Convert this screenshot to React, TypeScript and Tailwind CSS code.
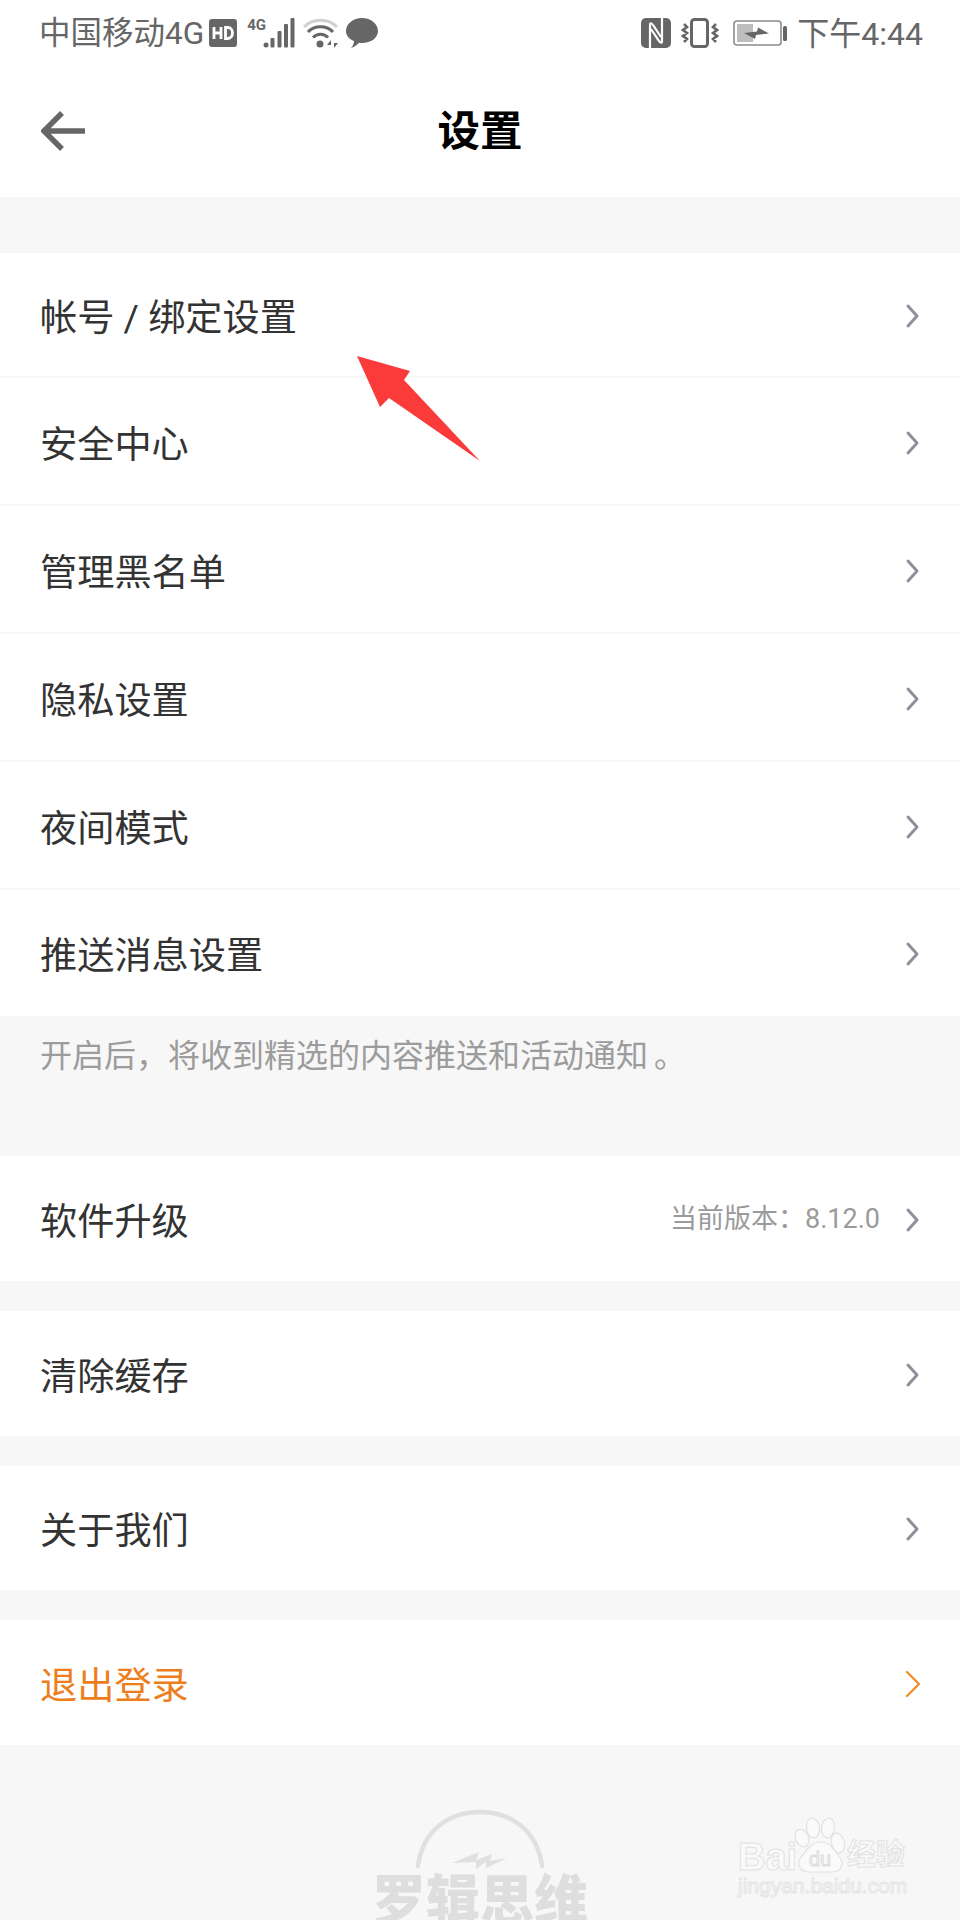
const rows = ['帐号 / 绑定设置', '安全中心', '管理黑名单', '隐私设置', '夜间模式', '推送消息设置']

function Chevron({ orange }: { orange?: boolean }) {
  return (
    <svg width="18" height="30" viewBox="0 0 18 30" fill="none" className={orange ? 'text-[#f08a24]' : 'text-[#8b9099]'}>
      <path d={orange ? 'M3 3 L15 15 L3 27' : 'M4 5 L13 15 L4 25'} stroke="currentColor" strokeWidth={orange ? 2.2 : 3} strokeLinecap="round" strokeLinejoin="round" />
    </svg>
  )
}

function Row({ label, h, divider, orange, right }: { label: string; h: string; divider?: boolean; orange?: boolean; right?: string }) {
  return (
    <div className={`${h} flex shrink-0 items-center justify-between bg-white pl-[40px] pr-[38px] ${divider ? 'border-b-2 border-[#f7f7f7]' : ''}`}>
      <span className={`${divider ? 'pt-[9px]' : 'pt-[8px]'} text-[37.2px] leading-none ${orange ? 'text-[#ee7d1c]' : 'text-[#333333]'}`}>{label}</span>
      <div className={`flex items-center ${divider ? 'pt-[3px]' : 'pt-[2px]'}`}>
        {right && <span className="mr-[24px] text-[27px] leading-none text-[#9a9a9a]">{right}</span>}
        <Chevron orange={orange} />
      </div>
    </div>
  )
}

function StatusIconsLeft() {
  return (
    <div className="ml-[5px] flex items-center">
      <svg width="28" height="28" viewBox="0 0 28 28">
        <rect width="28" height="28" rx="3" fill="#666" />
        <path d="M5 8v12M5 14h7M12 8v12M16.500 8.500v11h2.500a4.500 5.500 0 0 0 0-11z" stroke="#fff" strokeWidth="2.800" fill="none" />
      </svg>
      <div className="relative ml-[10px] h-[30px] w-[48px]">
        <span className="absolute left-0 top-0 text-[15px] font-bold leading-none text-[#666666]">4G</span>
        <svg width="48" height="30" viewBox="0 0 48 30" fill="#666">
          <circle cx="19" cy="27" r="2.500" />
          <rect x="23.500" y="20" width="4" height="9.500" rx="1" />
          <rect x="30.500" y="13" width="4" height="16.500" rx="1" />
          <rect x="37" y="6" width="4" height="23.500" rx="1" />
          <rect x="43.500" y="0" width="4" height="29.500" rx="1" />
        </svg>
      </div>
      <svg width="36" height="30" viewBox="0 0 36 30" className="ml-[8px]" fill="none">
        <path d="M1 9 C10 0 25 0 34 9" stroke="#cfcfcf" strokeWidth="3" />
        <path d="M5 14 C11 7 24 7 30 14" stroke="#666" strokeWidth="3" />
        <path d="M10 19.500 C14 15 21 15 25 19.500" stroke="#666" strokeWidth="3" />
        <circle cx="17" cy="26" r="3.500" fill="#666" />
        <path d="M28 30v-8l-4 5h4zM31 22v8l4-5h-4z" fill="#666" />
      </svg>
      <svg width="32" height="30" viewBox="0 0 32 30" className="ml-[7px]">
        <path d="M16 0 C25 0 32 6 32 13 C32 20 25 25 16 25 C15 25 14 25 13 24.800 C11 27 9 29 5 30 C7 28 8 25.500 8 23 C3 21 0 17.500 0 13 C0 6 7 0 16 0Z" fill="#666" />
      </svg>
    </div>
  )
}

function StatusIconsRight() {
  return (
    <div className="flex items-center">
      <svg width="30" height="30" viewBox="0 0 30 30">
        <rect width="30" height="30" rx="5" fill="#666" />
        <path d="M9 30 V7 Q9 3.500 12 7 L20 19 M21 0 V23 Q21 26.500 18 23 L10 11" stroke="#fff" strokeWidth="2.200" fill="none" />
      </svg>
      <svg width="38" height="30" viewBox="0 0 38 30" className="ml-[10px]" fill="none" stroke="#666">
        <rect x="10.500" y="1.500" width="16" height="27" rx="3" strokeWidth="3" />
        <path d="M3 6l3 3-4 3 4 3-4 3 4 3-3 3M35 6l-3 3 4 3-4 3 4 3-4 3 3 3" strokeWidth="2.600" />
      </svg>
      <svg width="54" height="26" viewBox="0 0 54 26" className="ml-[14px]">
        <rect x="1" y="1" width="47" height="24" rx="3" fill="#fff" stroke="#8c8c8c" strokeWidth="1.600" />
        <rect x="4" y="4" width="16" height="18" fill="#bdbdbd" />
        <path d="M11 13l13-1.500 1-4 11 6-13 1.500-1 4z" fill="#666" />
        <rect x="50" y="6" width="4" height="15" rx="1.500" fill="#666" />
      </svg>
      <span className="ml-[10px] pt-[2px] text-[32px] leading-none text-[#666666]">下午4:44</span>
    </div>
  )
}

function BottomLogo() {
  return (
    <div className="flex shrink-0 flex-col items-center pt-[63px]">
      <svg width="132" height="62" viewBox="0 0 132 62" fill="none">
        <path d="M4 58 C9 22 35 4 66 4 C97 4 123 22 128 58" stroke="#e0e0e0" strokeWidth="4.500" strokeLinecap="round" />
        <path d="M38 55 L65 44 L62 52 L78 46 L76 53 L93 50 L72 60 L72 54 L62 61 L62 54z" fill="#e0e0e0" />
      </svg>
      <span className="mt-[5px] text-[54px] font-black leading-none text-[#dedede]">罗辑思维</span>
    </div>
  )
}

function Watermark() {
  return (
    <div className="absolute left-[737px] top-[1816px] h-[84px] w-[172px]">
      <svg width="172" height="60" viewBox="0 0 172 60" className="absolute left-0 top-0" fill="#fafafa" stroke="#e2e2e2" strokeWidth="1.200">
        <ellipse cx="65" cy="22" rx="6.500" ry="9" transform="rotate(-25 65 22)" />
        <ellipse cx="76" cy="12" rx="6.500" ry="10" transform="rotate(-8 76 12)" />
        <ellipse cx="91" cy="12" rx="6.500" ry="10" transform="rotate(8 91 12)" />
        <ellipse cx="101" cy="27" rx="6.500" ry="10" transform="rotate(-15 101 27)" />
        <path d="M84 26 C92 26 97 33 102 40 C108 48 104 56 95 56 C90 56 78 56 72 56 C63 56 59 48 64 41 C70 33 76 26 84 26Z" />
      </svg>
      <span className="absolute left-[1px] top-[22px] text-[38px] font-bold leading-none text-[#fafafa] [-webkit-text-stroke:1px_#e2e2e2] [font-family:'Liberation_Sans',sans-serif]">Bai</span>
      <span className="absolute left-[72px] top-[33px] text-[20px] leading-none text-[#fafafa] [-webkit-text-stroke:1px_#dcdcdc] [font-family:'Liberation_Sans',sans-serif]">du</span>
      <span className="absolute left-[110px] top-[25px] text-[29px] font-bold leading-none text-[#fafafa] [-webkit-text-stroke:1px_#e2e2e2]">经验</span>
      <span className="absolute left-[1px] top-[59px] text-[21px] leading-none text-[#fafafa] [-webkit-text-stroke:1px_#e4e4e4] [font-family:'Liberation_Sans',sans-serif]">jingyan.baidu.com</span>
    </div>
  )
}

export default function App() {
  return (
    <div className="relative flex h-[1920px] w-[960px] flex-col overflow-hidden bg-[#f7f7f7] [font-family:Roboto,'Noto_Sans_CJK_SC',sans-serif]">
      <div className="h-[197px] shrink-0 bg-white">
        <div className="flex h-[66px] items-center justify-between pl-[39px] pr-[37px]">
          <div className="flex items-center">
            <span className="pt-[2px] text-[31.500px] leading-none text-[#666666]">中国移动4G</span>
            <StatusIconsLeft />
          </div>
          <StatusIconsRight />
        </div>
        <div className="relative flex h-[131px] items-center justify-center">
          <svg width="46" height="42" viewBox="0 0 46 42" fill="none" className="absolute left-[41px] top-[44px]">
            <path d="M21 3 L3 21 L21 39 M3 21 H44" stroke="#666" strokeWidth="5.500" strokeLinejoin="miter" />
          </svg>
          <h1 className="pt-[2px] text-[42.500px] font-bold leading-none text-black">设置</h1>
        </div>
      </div>

      <div className="mt-[56px] shrink-0">
        {rows.map((r, i) => (
          <Row key={r} label={r} divider={i < rows.length - 1} h={i === 0 ? 'h-[125px]' : i === 5 ? 'h-[126px]' : 'h-[128px]'} />
        ))}
      </div>

      <div className="h-[140px] shrink-0 pl-[40px] pt-[24px] text-[32px] leading-none text-[#9c9c9c]">
        开启后，将收到精选的内容推送和活动通知<span className="ml-[6px]">。</span>
      </div>

      <Row label="软件升级" h="h-[125px]" right="当前版本：8.12.0" />
      <div className="mt-[30px] shrink-0"><Row label="清除缓存" h="h-[125px]" /></div>
      <div className="mt-[30px] shrink-0"><Row label="关于我们" h="h-[124px]" /></div>
      <div className="mt-[30px] shrink-0"><Row label="退出登录" h="h-[125px]" orange /></div>

      <BottomLogo />
      <Watermark />

      {/* annotation arrow on top of the screenshot */}
      <svg width="130" height="110" viewBox="0 0 130 110" className="absolute left-[355px] top-[354px]">
        <path d="M2 2 L55 17 L49 26 L125 107 L34 44 L25 53Z" fill="#fb3a3a" />
      </svg>
    </div>
  )
}
